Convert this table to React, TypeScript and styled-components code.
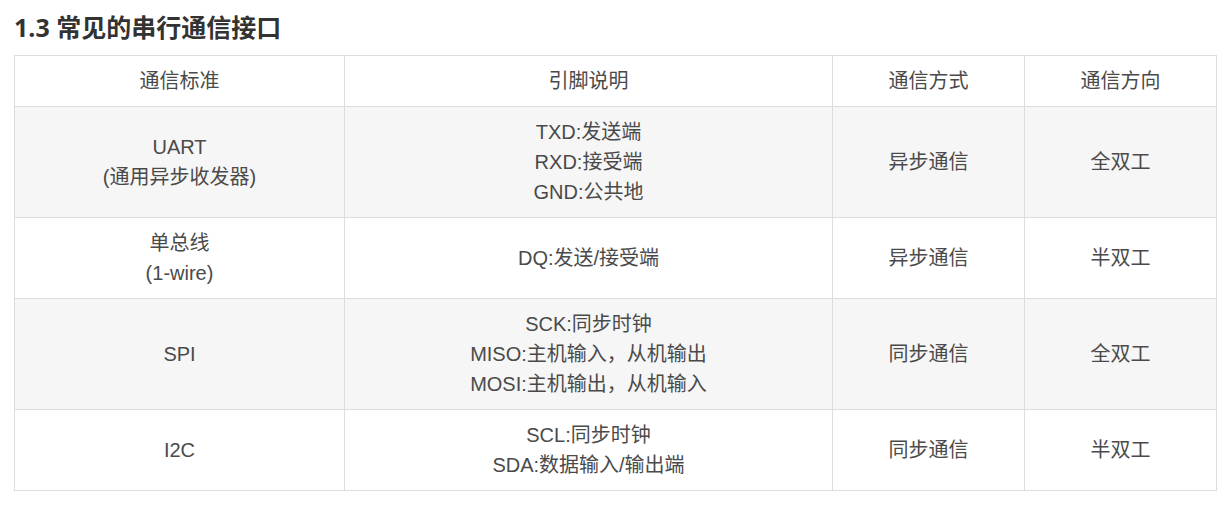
import React from "react";
import styled, { createGlobalStyle } from "styled-components";

const Global = createGlobalStyle`
  html, body { margin: 0; padding: 0; background: #fff; }
  body { font-family: "Liberation Sans", "Noto Sans CJK SC", sans-serif; }
`;

const Page = styled.div`
  padding: 8px 10px 0 14px;
`;

const Heading = styled.h3`
  margin: 0 0 9px 0;
  font-family: "Open Sans", "Noto Sans CJK SC", sans-serif;
  font-weight: 700;
  font-size: 25px;
  line-height: 38px;
  color: #333;
`;

const Table = styled.table`
  border-collapse: collapse;
  table-layout: fixed;
  width: 1202px;
  font-size: 20px;
  color: #4a4a4a;
`;

const Row = styled.tr<{ $shaded?: boolean }>`
  background: ${(p) => (p.$shaded ? "#f6f6f6" : "#fff")};
`;

const Cell = styled.td`
  border: 1px solid #dddddd;
  padding: 10px 8px;
  text-align: center;
  vertical-align: middle;
  line-height: 30px;
`;

const HeadCell = styled(Cell).attrs({ as: "th" })`
  font-weight: 400;
`;

const Line = styled.div``;

type R = { std: string[]; pins: string[]; mode: string; dir: string };

const rows: R[] = [
  { std: ["UART", "(通用异步收发器)"], pins: ["TXD:发送端", "RXD:接受端", "GND:公共地"], mode: "异步通信", dir: "全双工" },
  { std: ["单总线", "(1-wire)"], pins: ["DQ:发送/接受端"], mode: "异步通信", dir: "半双工" },
  { std: ["SPI"], pins: ["SCK:同步时钟", "MISO:主机输入，从机输出", "MOSI:主机输出，从机输入"], mode: "同步通信", dir: "全双工" },
  { std: ["I2C"], pins: ["SCL:同步时钟", "SDA:数据输入/输出端"], mode: "同步通信", dir: "半双工" },
];

export default function App() {
  return (
    <Page>
      <Global />
      <Heading>1.3 常见的串行通信接口</Heading>
      <Table>
        <colgroup>
          <col style={{ width: 330 }} />
          <col style={{ width: 488 }} />
          <col style={{ width: 192 }} />
          <col style={{ width: 192 }} />
        </colgroup>
        <thead>
          <Row>
            <HeadCell>通信标准</HeadCell>
            <HeadCell>引脚说明</HeadCell>
            <HeadCell>通信方式</HeadCell>
            <HeadCell>通信方向</HeadCell>
          </Row>
        </thead>
        <tbody>
          {rows.map((r, i) => (
            <Row key={i} $shaded={i % 2 === 0}>
              <Cell>{r.std.map((s) => <Line key={s}>{s}</Line>)}</Cell>
              <Cell>{r.pins.map((s) => <Line key={s}>{s}</Line>)}</Cell>
              <Cell>{r.mode}</Cell>
              <Cell>{r.dir}</Cell>
            </Row>
          ))}
        </tbody>
      </Table>
    </Page>
  );
}
